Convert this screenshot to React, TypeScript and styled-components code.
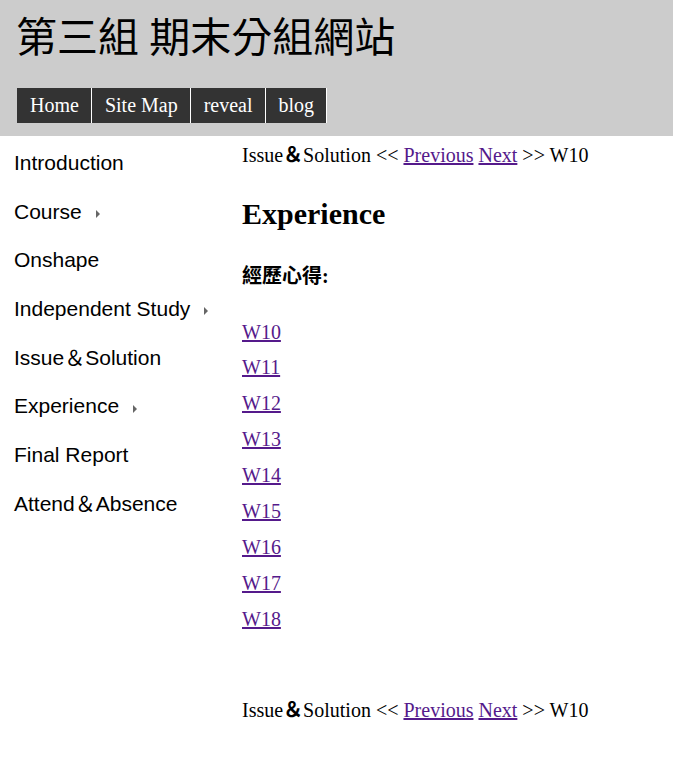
import React from "react";
import styled, { createGlobalStyle } from "styled-components";

const Global = createGlobalStyle`
  html, body { margin: 0; padding: 0; background: #fff; }
  body { font-family: "Liberation Serif", "Noto Sans CJK TC", serif; color: #000; }
`;

const Header = styled.header`
  background: #ccc;
  height: 136px;
  padding: 0 17px;
  box-sizing: border-box;
  display: flex;
  flex-direction: column;
`;

const Title = styled.h1`
  margin: 14px 0 0 -1px;
  font-family: "Liberation Serif", "Noto Sans CJK TC", serif;
  font-weight: normal;
  font-size: 41px;
  line-height: 48px;
  color: #000;
  white-space: nowrap;
`;

const Nav = styled.ul`
  list-style: none;
  margin: 26px 0 0;
  padding: 0;
  display: flex;
`;

const NavItem = styled.li`
  background: #333;
  color: #fff;
  font-size: 20px;
  height: 35px;
  line-height: 35px;
  padding: 0 12px 0 13px;
  border-right: 1px solid #fff;
`;

const Main = styled.div`
  display: flex;
`;

const Sidebar = styled.nav`
  width: 228px;
  flex: none;
  padding: 3px 0 0 14px;
  box-sizing: border-box;
  font-family: "Liberation Sans", "Noto Sans CJK TC", sans-serif;
  font-size: 21px;
`;

const SideItem = styled.div`
  height: 48.7px;
  line-height: 48.7px;
  display: flex;
  align-items: center;
  white-space: nowrap;
`;

const Arrow = styled.span`
  display: inline-block;
  width: 0;
  height: 0;
  margin: 4px 0 0 14px;
  border-top: 4px solid transparent;
  border-bottom: 4px solid transparent;
  border-left: 4px solid #666;
`;

const Content = styled.div`
  padding-left: 14px;
  font-size: 20px;
`;

const Crumb = styled.div<{ $top: number }>`
  line-height: 23px;
  margin-top: ${(p) => p.$top}px;
  white-space: nowrap;
`;

const Amp = styled.span`
  font-weight: bold;
`;

const Link = styled.a`
  color: #551a8b;
  text-decoration: underline;
`;

const Heading = styled.h1`
  font-size: 30px;
  line-height: 34px;
  font-weight: bold;
  margin: 30px 0 0;
`;

const SubHeading = styled.h3`
  font-size: 20px;
  line-height: 23px;
  font-weight: bold;
  margin: 34px 0 0;
`;

const WeekList = styled.div`
  margin-top: 26.5px;
  display: flex;
  flex-direction: column;
`;

const WeekRow = styled.div`
  height: 35.9px;
  line-height: 35.9px;
`;

const sideItems: { label: string; arrow?: boolean }[] = [
  { label: "Introduction" },
  { label: "Course", arrow: true },
  { label: "Onshape" },
  { label: "Independent Study", arrow: true },
  { label: "Issue＆Solution" },
  { label: "Experience", arrow: true },
  { label: "Final Report" },
  { label: "Attend＆Absence" },
];

const weeks = ["W10", "W11", "W12", "W13", "W14", "W15", "W16", "W17", "W18"];

const Breadcrumb = ({ top }: { top: number }) => (
  <Crumb $top={top}>
    Issue<Amp>＆</Amp>Solution &lt;&lt; <Link href="#">Previous</Link>{" "}
    <Link href="#">Next</Link> &gt;&gt; W10
  </Crumb>
);

export default function App() {
  return (
    <>
      <Global />
      <Header>
        <Title>第三組 期末分組網站</Title>
        <Nav>
          <NavItem>Home</NavItem>
          <NavItem>Site Map</NavItem>
          <NavItem>reveal</NavItem>
          <NavItem>blog</NavItem>
        </Nav>
      </Header>
      <Main>
        <Sidebar>
          {sideItems.map((s) => (
            <SideItem key={s.label}>
              {s.label}
              {s.arrow && <Arrow />}
            </SideItem>
          ))}
        </Sidebar>
        <Content>
          <Breadcrumb top={8} />
          <Heading>Experience</Heading>
          <SubHeading>經歷心得:</SubHeading>
          <WeekList>
            {weeks.map((w) => (
              <WeekRow key={w}>
                <Link href="#">{w}</Link>
              </WeekRow>
            ))}
          </WeekList>
          <Breadcrumb top={61.5} />
        </Content>
      </Main>
    </>
  );
}
